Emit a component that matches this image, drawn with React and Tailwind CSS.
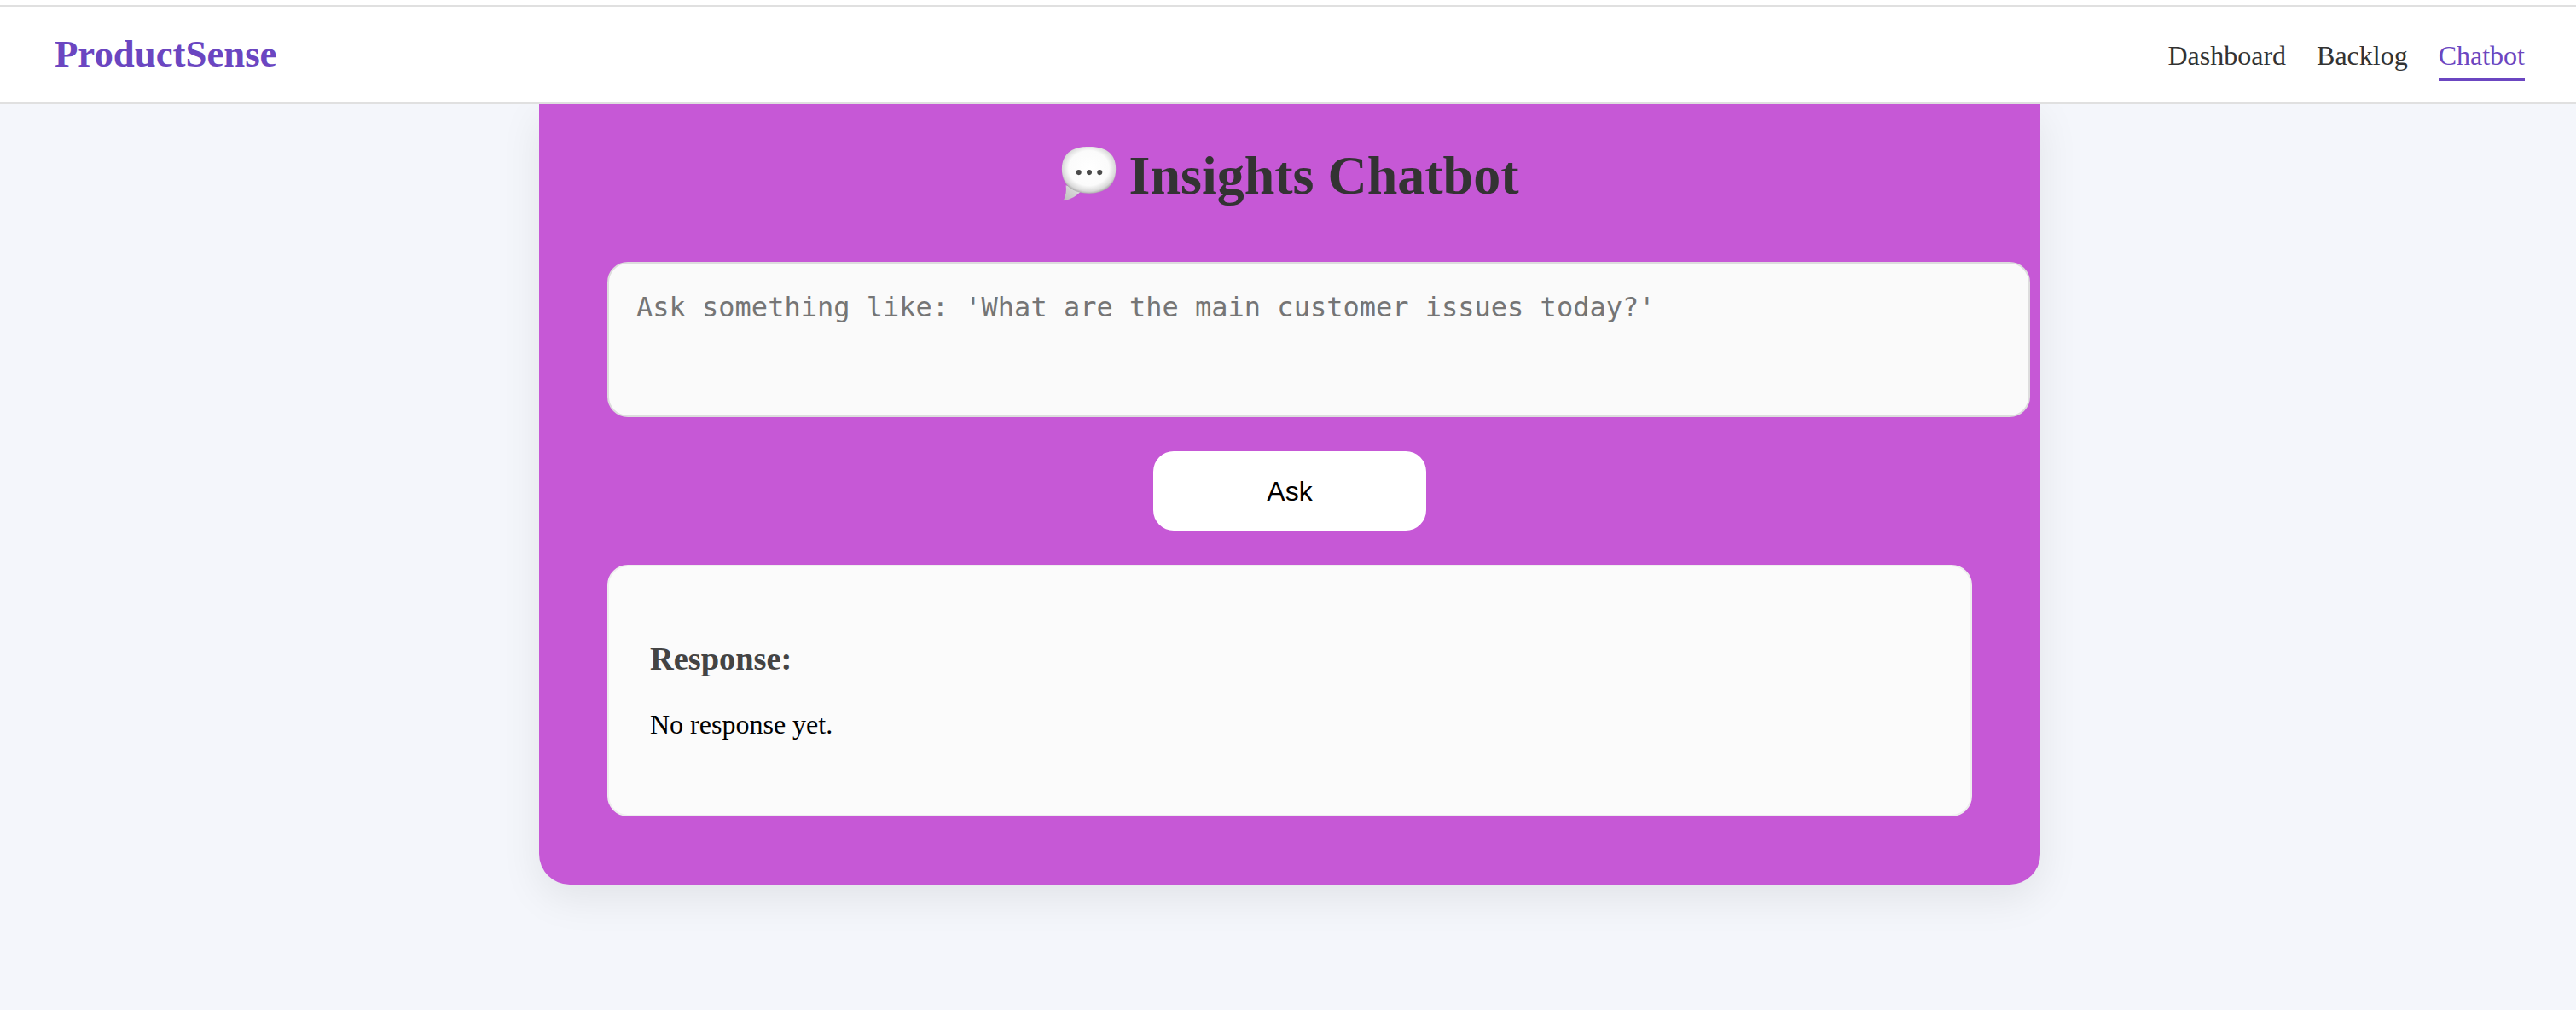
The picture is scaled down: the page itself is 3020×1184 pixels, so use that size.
const SpeechBubble = () => (
  <svg width="68" height="68" viewBox="0 0 72 72" className="shrink-0 mb-[4px]">
    <defs>
      <radialGradient id="bubbleFill" cx="50%" cy="46%" r="55%">
        <stop offset="0%" stopColor="#ffffff" />
        <stop offset="68%" stopColor="#fbfbfb" />
        <stop offset="90%" stopColor="#d9d9d9" />
        <stop offset="100%" stopColor="#a9a9a9" />
      </radialGradient>
      <linearGradient id="bubbleTail" x1="0" y1="1" x2="1" y2="0">
        <stop offset="0%" stopColor="#bdbdbd" />
        <stop offset="100%" stopColor="#e6e6e6" />
      </linearGradient>
    </defs>
    <path d="M7 50 C8 56 7 63 4 69 C13 68 21 63 26 57 Z" fill="url(#bubbleTail)" />
    <path
      d="M36 2 C54 2 69 8 69 30 C69 50 56 60 36 60 C15 60 2 50 2 30 C2 9 17 2 36 2 Z"
      fill="url(#bubbleFill)"
    />
    <circle cx="23" cy="34" r="3.2" fill="#4a4a4a" />
    <circle cx="36" cy="34" r="3.2" fill="#4a4a4a" />
    <circle cx="49" cy="34" r="3.2" fill="#4a4a4a" />
  </svg>
);

const App = () => {
  return (
    <div className="min-h-[1184px] bg-[#f4f6fb] font-['Liberation_Serif',serif] overflow-hidden">
      {/* NAVBAR */}
      <div className="bg-white pt-[6px] relative z-10">
        <nav className="h-[116px] flex justify-between items-center pl-[64px] pr-[60px] border-y-2 border-[#e0e0e0]">
          <div className="text-[44.8px] font-bold text-[#6b46c1]">ProductSense</div>
          <div className="flex gap-[36px] mt-[8px] text-[32px] text-[#333333]">
            <a className="pb-[2px] border-b-4 border-transparent">Dashboard</a>
            <a className="pb-[2px] border-b-4 border-transparent">Backlog</a>
            <a className="pb-[2px] border-b-4 border-[#6b46c1] text-[#6b46c1]">Chatbot</a>
          </div>
        </nav>
      </div>

      {/* PANEL */}
      <main className="w-[1760px] h-[915px] ml-[632px] px-[80px] pt-[45px] bg-[#c658d6] rounded-b-[36px] shadow-[0_16px_48px_rgba(0,0,0,0.08)]">
        <h1 className="flex justify-center items-center gap-[12px] h-[78px] text-[64px] font-bold text-[#333333]">
          <SpeechBubble />
          Insights Chatbot
        </h1>

        <textarea
          readOnly
          placeholder="Ask something like: 'What are the main customer issues today?'"
          className="block w-[1668px] h-[182px] mt-[62px] px-[32px] pt-[31px] pb-[32px] bg-[#fafafa] border-2 border-[#dddddd] rounded-[24px] font-['DejaVu_Sans_Mono',monospace] text-[32px] leading-[40px] placeholder:text-[#757575] resize-none outline-none"
        />

        <div className="flex justify-center mt-[40px]">
          <button className="w-[320px] h-[93px] bg-white rounded-[24px] font-['Liberation_Sans',sans-serif] text-[32px] text-black">
            Ask
          </button>
        </div>

        <section className="w-[1600px] h-[295px] mt-[40px] px-[48px] pt-[86px] bg-[#fbfbfb] border-2 border-[#eeeeee] rounded-[24px]">
          <h3 className="text-[38.4px] leading-[44px] font-bold text-[#444444]">Response:</h3>
          <p className="mt-[37px] text-[32px] leading-[37px] text-black">No response yet.</p>
        </section>
      </main>
    </div>
  );
};

export default App;
